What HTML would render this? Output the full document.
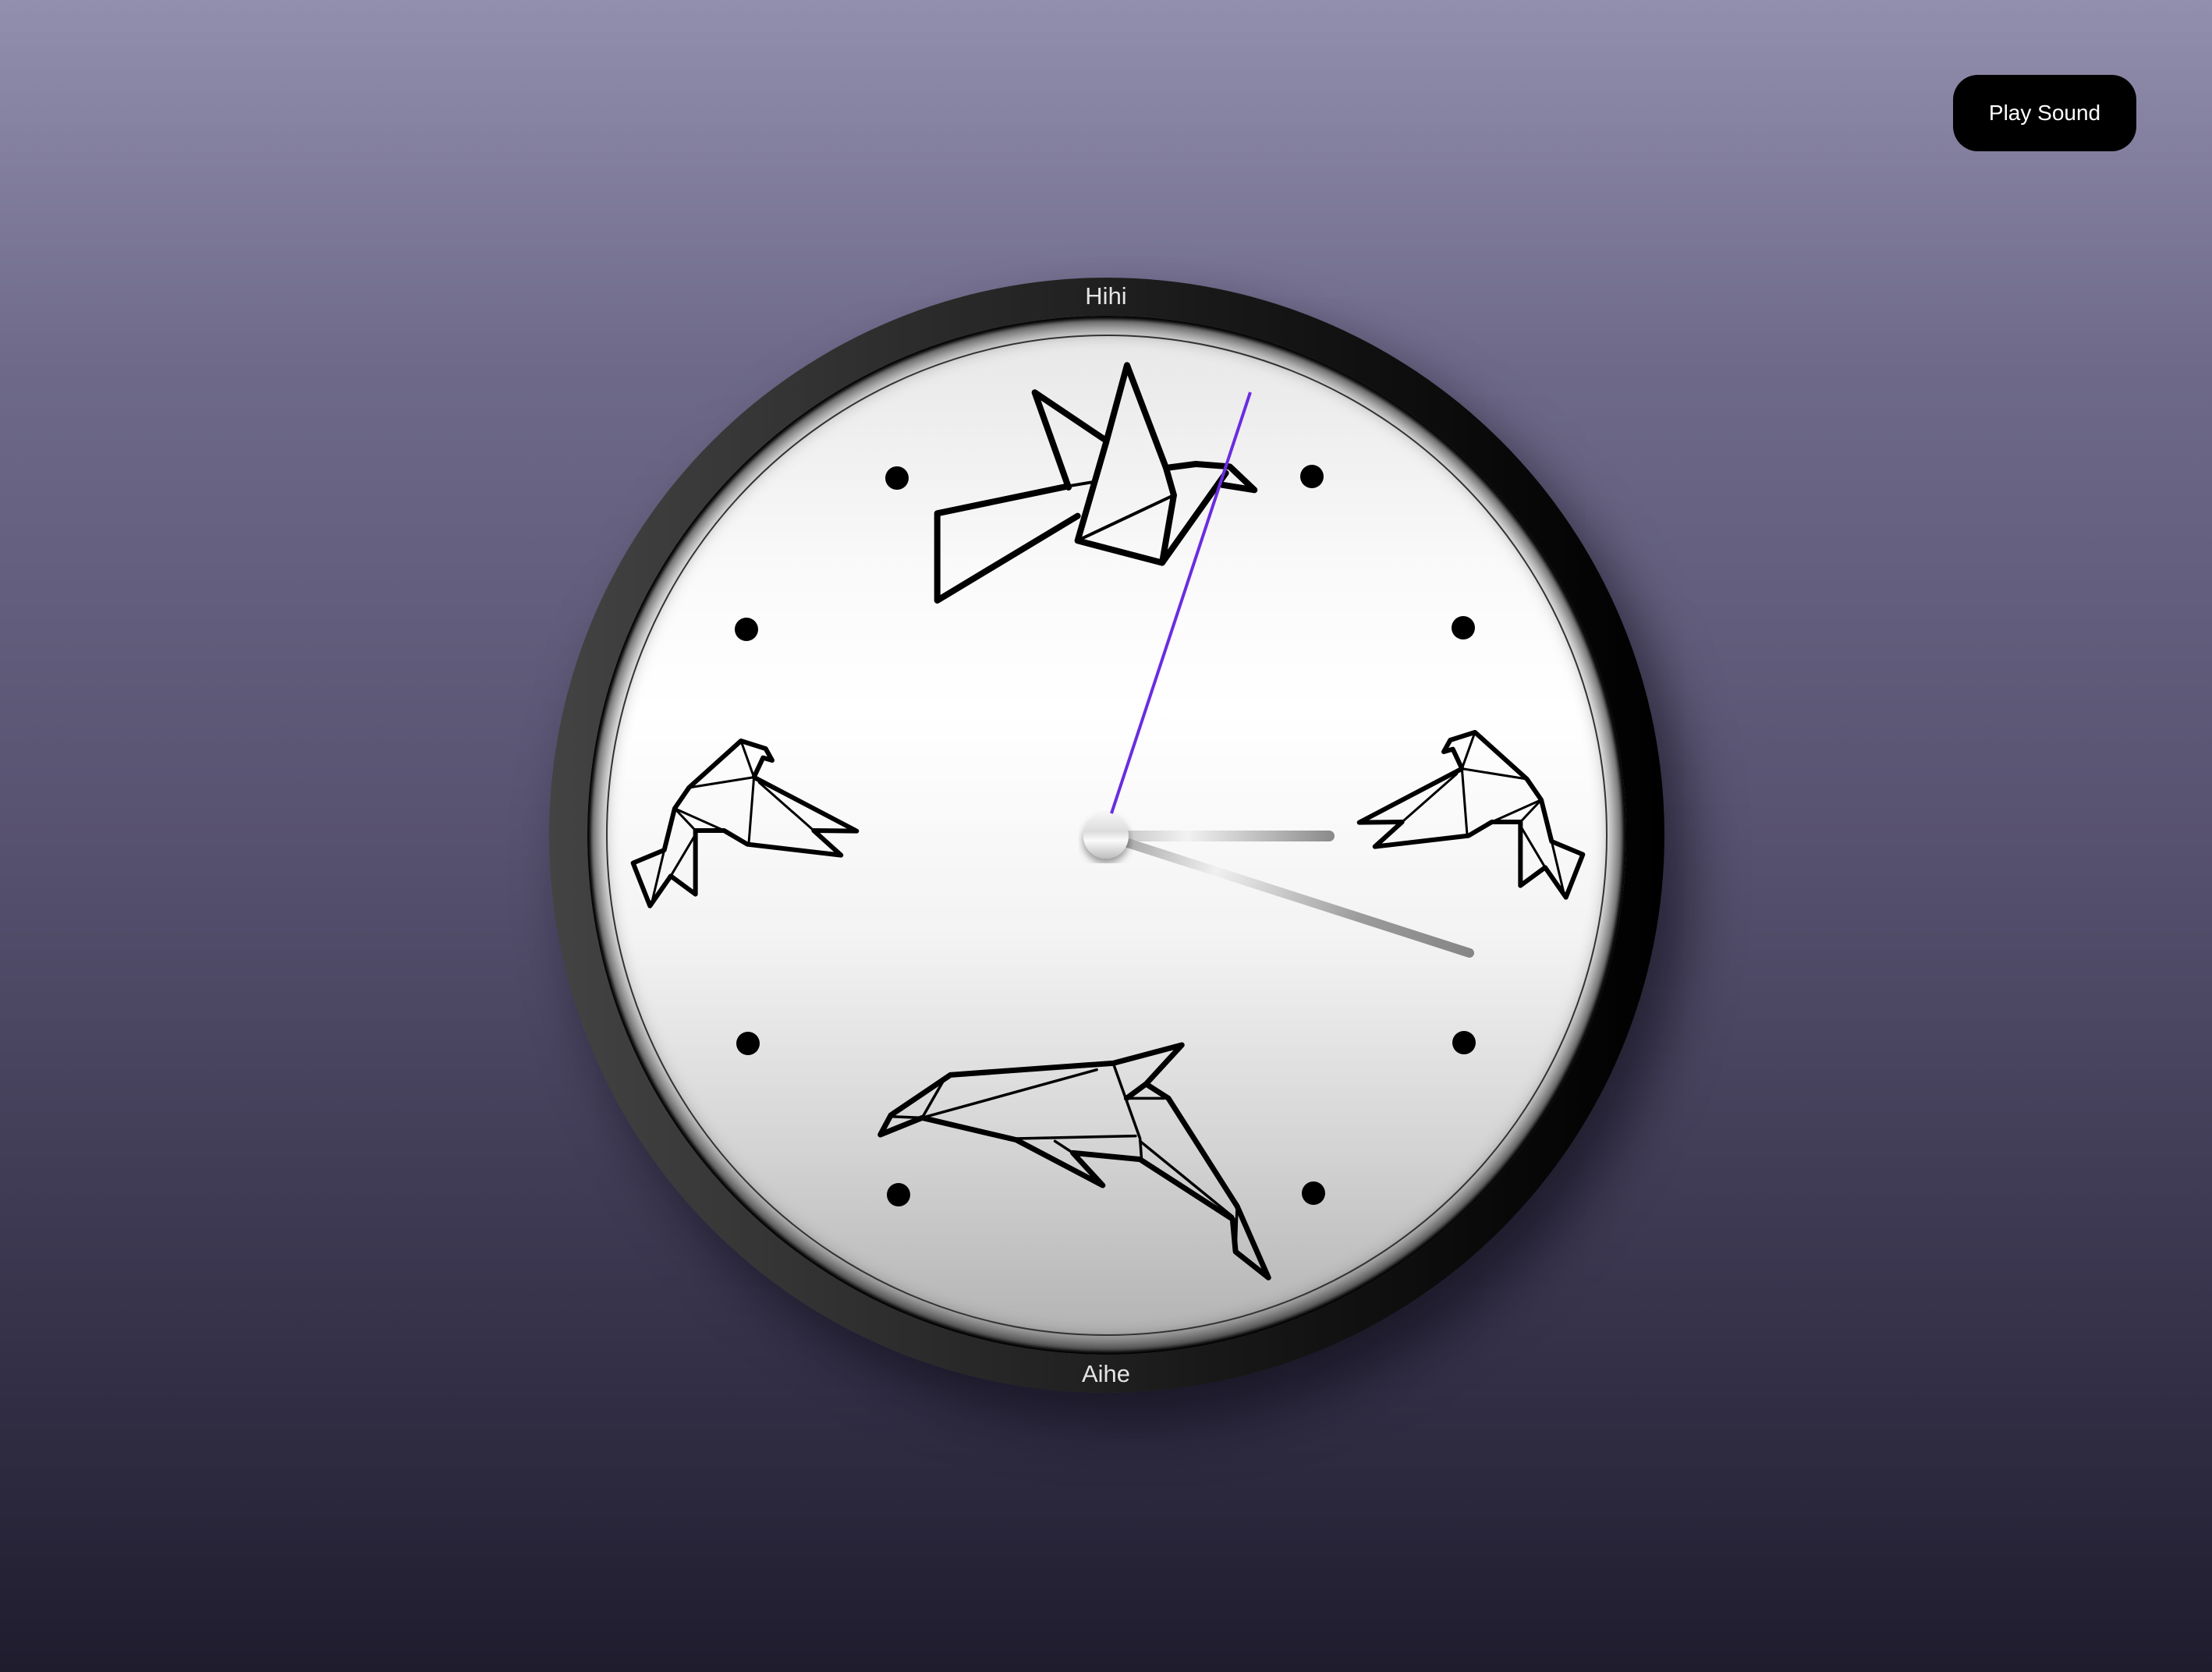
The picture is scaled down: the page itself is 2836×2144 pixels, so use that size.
<!DOCTYPE html>
<html><head><meta charset="utf-8"><style>
html,body{margin:0;padding:0}
body{width:2836px;height:2144px;overflow:hidden;position:relative;background:linear-gradient(180deg,#928ead 0%,#6e6989 22%,#575270 50%,#3b3750 75%,#1f1c2e 100%);font-family:"Liberation Sans",sans-serif}
.btn{position:absolute;left:2504px;top:96px;width:235px;height:98px;border-radius:32px;background:#000;color:#fff;font-size:28px;display:flex;align-items:center;justify-content:center}
.bezel{position:absolute;left:704px;top:356px;width:1430px;height:1430px;border-radius:50%;background:linear-gradient(90deg,#434343 0%,#2a2a2a 35%,#181818 60%,#000 100%);box-shadow:30px 40px 70px rgba(10,8,20,.6)}
.face{position:absolute;left:753px;top:405px;width:1332px;height:1332px;border-radius:50%;background:linear-gradient(180deg,#e6e6e6 0%,#fafafa 25%,#fff 38%,#f3f3f3 60%,#d4d4d4 80%,#b0b0b0 100%);box-shadow:inset 0 0 28px 10px rgba(0,0,0,.9),inset 0 0 4px 4px #000}
.lbl{position:absolute;color:#e4e4e4;font-size:31px;width:200px;text-align:center;left:1318px}
svg{position:absolute;left:0;top:0}
</style></head><body>
<div class="btn">Play Sound</div>
<div class="bezel"></div>
<div class="face"></div>
<div class="lbl" style="top:362px">Hihi</div>
<div class="lbl" style="top:1744px">Aihe</div>
<svg width="2836" height="2144" viewBox="0 0 2836 2144">
<defs>
<linearGradient id="hg" x1="1418" y1="0" x2="1714" y2="0" gradientUnits="userSpaceOnUse"><stop offset="0" stop-color="#bbb"/><stop offset=".35" stop-color="#f2f2f2"/><stop offset="1" stop-color="#888"/></linearGradient>
<linearGradient id="mg" x1="1418" y1="1072" x2="1888" y2="1224" gradientUnits="userSpaceOnUse"><stop offset="0" stop-color="#999"/><stop offset=".3" stop-color="#f0f0f0"/><stop offset=".7" stop-color="#9a9a9a"/><stop offset="1" stop-color="#858585"/></linearGradient>
<linearGradient id="cg" x1="0" y1="0" x2="0" y2="1"><stop offset="0" stop-color="#f4f4f4"/><stop offset=".4" stop-color="#dcdcdc"/><stop offset=".6" stop-color="#fafafa"/><stop offset="1" stop-color="#bdbdbd"/></linearGradient>
<filter id="sh"><feDropShadow dx="0" dy="6" stdDeviation="5" flood-opacity=".4"/></filter>
</defs>
<circle cx="1419" cy="1071" r="641" fill="none" stroke="#333" stroke-width="2"/>
<g fill="#000">
<circle cx="1150" cy="613" r="15"/><circle cx="1682" cy="611" r="15"/>
<circle cx="957" cy="807" r="15"/><circle cx="1876" cy="805" r="15"/>
<circle cx="959" cy="1338" r="15"/><circle cx="1877" cy="1337" r="15"/>
<circle cx="1152" cy="1532" r="15"/><circle cx="1684" cy="1530" r="15"/>
</g>
<g fill="none" stroke="#000" stroke-linejoin="round" stroke-linecap="round">
<g transform="translate(1200,340) scale(0.3333)">
<path vector-effect="non-scaling-stroke" stroke-width="8" d="M5 1290 L5 955 L510 850 M5 1290 L545 965 M510 855 L380 490 L655 675 M545 1060 L655 680 L735 385 L885 780 L915 885 L870 1145 Z M870 1145 L1115 800 M885 780 L1000 765 L1130 775 L1225 865 L1100 845"/>
<path vector-effect="non-scaling-stroke" stroke-width="4" d="M510 850 L600 835 M915 885 L565 1050"/>
</g>
<g transform="translate(680,900) scale(0.3333)">
<path vector-effect="non-scaling-stroke" stroke-width="6" d="M610 330 L810 150 L905 180 L930 225 L895 215 L860 290 L1255 497 L1090 495 L1195 590 L835 548 L745 495 L635 495 L635 740 L540 670 L460 785 L395 620 L515 570 L555 410 Z"/>
<path vector-effect="non-scaling-stroke" stroke-width="3" d="M810 150 L860 290 M610 330 L860 290 M860 290 L840 545 M555 410 L745 495 M555 410 L635 495 M880 310 L1090 495 M515 570 L470 760 M540 670 L635 510"/>
</g>
<g transform="translate(2841,-11) scale(-1,1)">
<g transform="translate(680,900) scale(0.3333)">
<path vector-effect="non-scaling-stroke" stroke-width="6" d="M610 330 L810 150 L905 180 L930 225 L895 215 L860 290 L1255 497 L1090 495 L1195 590 L835 548 L745 495 L635 495 L635 740 L540 670 L460 785 L395 620 L515 570 L555 410 Z"/>
<path vector-effect="non-scaling-stroke" stroke-width="3" d="M810 150 L860 290 M610 330 L860 290 M860 290 L840 545 M555 410 L745 495 M555 410 L635 495 M880 310 L1090 495 M515 570 L470 760 M540 670 L635 510"/>
</g></g>
<g transform="translate(1100,1300) scale(0.3827,0.3333)">
<path vector-effect="non-scaling-stroke" stroke-width="7" d="M1085 120 L855 190 L310 235 L110 390 L75 465 L215 400 L530 485 L820 660 L720 535 L945 560 L1255 790 L1265 915 L1375 1015 L1270 740 L1040 325 L965 270 L900 325 L965 270 L1085 120"/>
<path vector-effect="non-scaling-stroke" stroke-width="3.5" d="M855 190 L945 480 L950 560 M215 400 L800 215 M530 480 L930 470 M110 395 L215 400 M290 250 L215 400 M900 325 L1025 325 M1265 915 L1270 740 M660 490 L720 535 M945 490 L1255 780"/>
</g>
</g>
<line x1="1418" y1="1072" x2="1704" y2="1072" stroke="url(#hg)" stroke-width="14" stroke-linecap="round"/>
<line x1="1418" y1="1072" x2="1884" y2="1222" stroke="url(#mg)" stroke-width="12" stroke-linecap="round"/>
<line x1="1425" y1="1043" x2="1603" y2="503" stroke="#6a2de0" stroke-width="4"/>
<circle cx="1418" cy="1072" r="29" fill="url(#cg)" filter="url(#sh)"/>
</svg>
</body></html>
